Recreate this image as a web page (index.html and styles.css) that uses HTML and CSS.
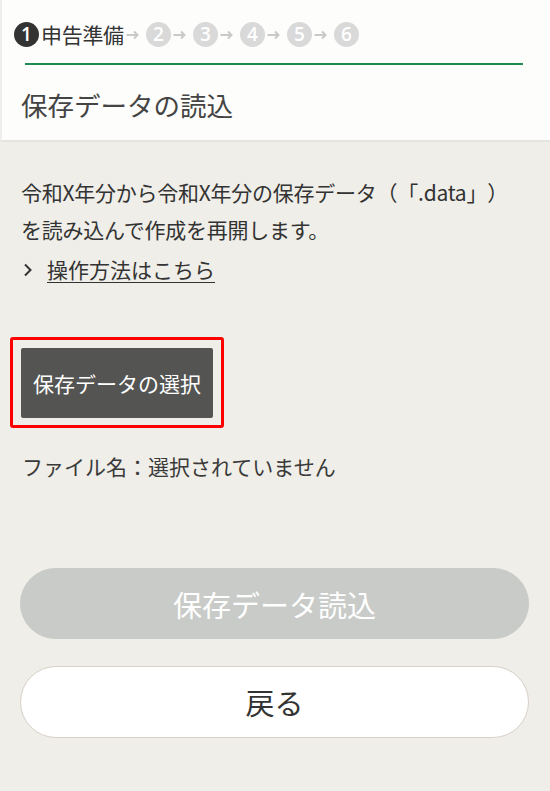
FILE: index.html
```html
<!DOCTYPE html>
<html lang="ja">
<head>
<meta charset="utf-8">
<title>保存データの読込</title>
<link rel="stylesheet" href="styles.css">
</head>
<body>
<header class="top">
  <div class="steps">
    <span class="step step-current">1</span>
    <span class="step-label">申告準備</span>
    <svg class="arrow" width="13" height="10" viewBox="0 0 13 10"><path d="M0.5 5H11.5M8 1.5L11.5 5L8 8.5" fill="none" stroke="#c9c9c9" stroke-width="2"/></svg>
    <span class="step">2</span>
    <svg class="arrow" width="13" height="10" viewBox="0 0 13 10"><path d="M0.5 5H11.5M8 1.5L11.5 5L8 8.5" fill="none" stroke="#c9c9c9" stroke-width="2"/></svg>
    <span class="step">3</span>
    <svg class="arrow" width="13" height="10" viewBox="0 0 13 10"><path d="M0.5 5H11.5M8 1.5L11.5 5L8 8.5" fill="none" stroke="#c9c9c9" stroke-width="2"/></svg>
    <span class="step">4</span>
    <svg class="arrow" width="13" height="10" viewBox="0 0 13 10"><path d="M0.5 5H11.5M8 1.5L11.5 5L8 8.5" fill="none" stroke="#c9c9c9" stroke-width="2"/></svg>
    <span class="step">5</span>
    <svg class="arrow" width="13" height="10" viewBox="0 0 13 10"><path d="M0.5 5H11.5M8 1.5L11.5 5L8 8.5" fill="none" stroke="#c9c9c9" stroke-width="2"/></svg>
    <span class="step">6</span>
  </div>
  <div class="rule"></div>
  <h1 class="title">保存データの読込</h1>
</header>
<main class="content">
  <p class="lead">令和X年分から令和X年分の保存データ（「.data」）<br>を読み込んで作成を再開します。</p>
  <p class="guide">
    <svg class="chev" width="10" height="14" viewBox="0 0 10 14"><path d="M2 1.5L7.5 7L2 12.5" fill="none" stroke="#333" stroke-width="2"/></svg>
    <a class="guide-link" href="#">操作方法はこちら</a>
  </p>
  <div class="select-wrap">
    <span class="focus-ring">
      <button class="select-btn" type="button">保存データの選択</button>
    </span>
  </div>
  <p class="filename">ファイル名：選択されていません</p>
  <div class="actions">
    <button class="btn btn-disabled" type="button">保存データ読込</button>
    <button class="btn btn-back" type="button">戻る</button>
  </div>
</main>
</body>
</html>
```
FILE: styles.css
```css
html, body {
  margin: 0;
  padding: 0;
}
body {
  background: #efeee8;
  font-family: "Noto Sans CJK JP", "Noto Sans", sans-serif;
  color: #333;
  width: 550px;
  min-height: 791px;
  text-spacing-trim: space-all;
}
.top {
  background: #fdfdfb;
  height: 140px;
  border-bottom: 2px solid #e5e4df;
  border-left: 2px solid #eeeeea;
}
.steps {
  display: flex;
  align-items: center;
  padding: 22px 0 0 12px;
  height: 25px;
}
.step {
  width: 25px;
  height: 25px;
  border-radius: 50%;
  background: #d9d9d9;
  color: #fff;
  font-family: "Open Sans", "Noto Sans", sans-serif;
  font-size: 19px;
  font-weight: 600;
  line-height: 25px;
  text-align: center;
  flex: none;
}
.step-current {
  background: #333;
}
.step-label {
  font-size: 21px;
  line-height: 25px;
  color: #333;
  margin-left: 2px;
  letter-spacing: -0.3px;
}
.arrow {
  flex: none;
  margin: 0 7px 0 2px;
}
.rule {
  margin: 16px 27px 0 23px;
  height: 2px;
  background: #1d8a52;
}
.title {
  margin: 21px 0 0 19px;
  font-size: 26.5px;
  font-weight: 400;
  line-height: 38px;
  color: #444;
}
.content {
  padding: 0 21px 0 20px;
}
.lead {
  margin: 32px 0 0 1px;
  font-size: 21px;
  line-height: 37px;
  letter-spacing: -0.25px;
}
.guide {
  margin: 3px 0 0 3px;
  font-size: 21px;
  line-height: 37px;
  display: flex;
  align-items: center;
}
.chev {
  flex: none;
  margin-right: 14px;
}
.guide-link {
  color: #333;
  text-decoration: underline;
  text-underline-offset: 4px;
  text-decoration-thickness: 1px;
}
.select-wrap {
  margin-top: 49px;
  margin-left: -10px;
  display: flex;
}
.focus-ring {
  display: block;
  border: 3px solid #f00;
  border-radius: 3px;
  padding: 8px 8px 7px;
}
.select-btn {
  display: block;
  width: 192px;
  height: 70px;
  border: none;
  border-radius: 2px;
  background: #545553;
  color: #fff;
  font-family: "Noto Sans CJK JP", "Noto Sans", sans-serif;
  font-size: 21px;
  padding: 0;
}
.filename {
  margin: 20px 0 0 2px;
  font-size: 21px;
  line-height: 37px;
  color: #3a3a3a;
}
.actions {
  display: flex;
  flex-direction: column;
  gap: 27px;
  margin-top: 83px;
}
.btn {
  display: block;
  width: 509px;
  height: 71px;
  border-radius: 36px;
  font-family: "Noto Sans CJK JP", "Noto Sans", sans-serif;
  font-size: 29px;
  padding: 0;
}
.btn-disabled {
  background: #c9cbc8;
  border: 1px solid #c9cbc8;
  color: #fff;
}
.btn-back {
  background: #fff;
  border: 1px solid #d8d0c8;
  color: #333;
  height: 72px;
}
```
